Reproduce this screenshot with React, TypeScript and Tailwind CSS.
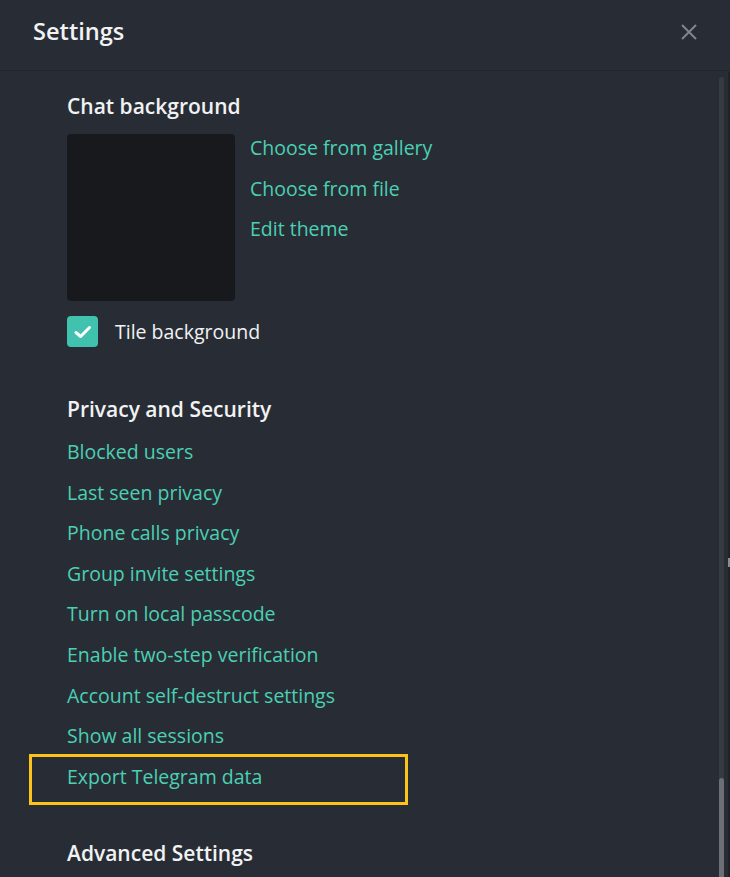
const privacyLinks = [
  'Blocked users',
  'Last seen privacy',
  'Phone calls privacy',
  'Group invite settings',
  'Turn on local passcode',
  'Enable two-step verification',
  'Account self-destruct settings',
  'Show all sessions',
  'Export Telegram data',
];

function CloseIcon() {
  return (
    <svg width="18" height="18" viewBox="0 0 18 18" fill="none" stroke="#80858b" strokeWidth="2">
      <path d="M2 2 L16 16 M16 2 L2 16" />
    </svg>
  );
}

function Link({ children }: { children: string }) {
  return <div className="h-[40.6px] leading-[40.6px] text-[19.5px] text-[#4bd0b4] whitespace-nowrap">{children}</div>;
}

export default function App() {
  return (
    <div
      className="relative h-[877px] w-[730px] overflow-hidden bg-[#282d35] text-[#f1f2f3]"
      style={{ fontFamily: '"Open Sans", "Noto Sans", sans-serif' }}
    >
      {/* header */}
      <div className="flex h-[71px] items-center justify-between border-b border-[#22262c] pb-[6px] pl-[33px] pr-[32px]">
        <span className="text-[23.6px] font-semibold">Settings</span>
        <CloseIcon />
      </div>

      {/* scrollbar */}
      <div className="absolute right-[6px] top-[77px] bottom-0 w-[5px] rounded-t-full bg-[#363b42]">
        <div className="absolute bottom-0 left-0 right-0 h-[99px] rounded-t-full bg-[#6c7074]" />
      </div>
      <div className="absolute right-0 top-[72px] bottom-0 w-[2px] bg-[#1f2227]" />
      <div className="absolute right-0 top-[558px] h-[9px] w-[2px] bg-[#8a8d90]" />

      <div className="pl-[67px] pt-[21px]">
        <h2 className="text-[21px] font-semibold leading-[28px]">Chat background</h2>

        <div className="mt-[14px] flex gap-[15px]">
          <div className="h-[167px] w-[168px] rounded-[4px] bg-[#18191d]" />
          <div className="-mt-[6px] flex flex-col">
            <Link>Choose from gallery</Link>
            <Link>Choose from file</Link>
            <Link>Edit theme</Link>
          </div>
        </div>

        <div className="mt-[15px] flex items-center gap-[17px]">
          <div className="flex h-[31px] w-[31px] items-center justify-center rounded-[4px] bg-[#40c2ae]">
            <svg width="20" height="20" viewBox="0 0 20 20" fill="none" stroke="#ffffff" strokeWidth="3" strokeLinecap="round" strokeLinejoin="round">
              <path d="M3 10.5 L7.6 14.5 L16.5 5.5" />
            </svg>
          </div>
          <span className="text-[19.5px] leading-[31px]">Tile background</span>
        </div>

        <h2 className="mt-[48px] text-[21px] font-semibold leading-[28px]">Privacy and Security</h2>

        <div className="mt-[9px] flex flex-col">
          {privacyLinks.map((label) =>
            label === 'Export Telegram data' ? (
              <div key={label} className="relative">
                <Link>{label}</Link>
                <div className="pointer-events-none absolute -left-[38px] -top-[3px] h-[51px] w-[379px] border-[3px] border-[#fcc419]" />
              </div>
            ) : (
              <Link key={label}>{label}</Link>
            ),
          )}
        </div>

        <h2 className="mt-[42px] text-[21px] font-semibold leading-[28px]">Advanced Settings</h2>
      </div>
    </div>
  );
}
